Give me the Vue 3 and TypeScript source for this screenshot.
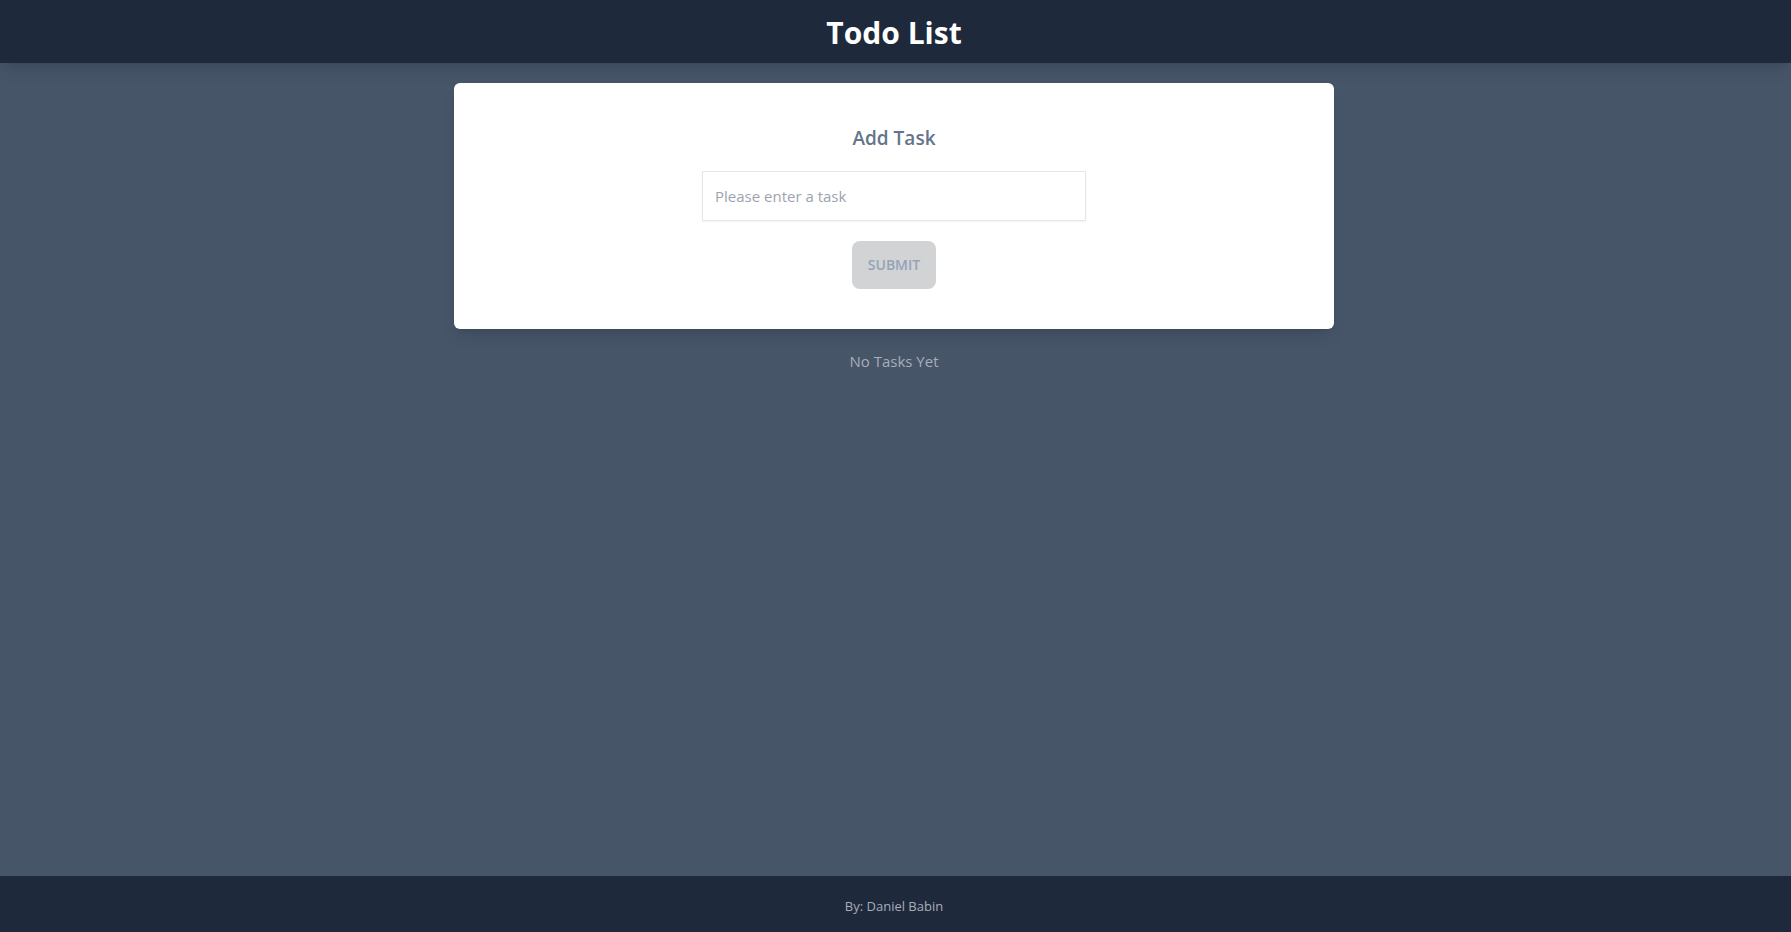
<script setup lang="ts">
import { computed, ref } from 'vue'

const draft = ref('')
const tasks = ref<string[]>([])
const empty = computed(() => draft.value.trim() === '')

function addTask(): void {
  if (empty.value) return
  tasks.value.push(draft.value.trim())
  draft.value = ''
}
</script>

<template>
  <div class="page">
    <header class="header">
      <h1>Todo List</h1>
    </header>
    <main class="main">
      <form class="card" @submit.prevent="addTask">
        <label class="label" for="task">Add Task</label>
        <input id="task" v-model="draft" class="field" type="text" placeholder="Please enter a task" />
        <button class="submit" type="submit" :disabled="empty">SUBMIT</button>
      </form>
      <p v-if="tasks.length === 0" class="note">No Tasks Yet</p>
      <ul v-else class="tasks">
        <li v-for="(task, i) in tasks" :key="i">{{ task }}</li>
      </ul>
    </main>
    <footer class="footer">
      <p>By: Daniel Babin</p>
    </footer>
  </div>
</template>

<style>
body {
  margin: 0;
  background: #475569;
}
</style>

<style scoped>
.page {
  display: flex;
  flex-direction: column;
  box-sizing: border-box;
  min-height: 100vh;
  padding-right: 3px;
  background: #475569;
  color: #a7adb9;
  font-family: "Segoe UI", "Open Sans", "Noto Sans", sans-serif;
  font-size: 15px;
  line-height: 24px;
}
.page *,
.page *::before {
  box-sizing: border-box;
}
h1,
p {
  margin: 0;
}
.header {
  margin-right: -3px;
  padding: 13px 3px 10px 0;
  background: #1e293b;
  box-shadow: 0 10px 15px -3px rgba(0, 0, 0, 0.1), 0 4px 6px -4px rgba(0, 0, 0, 0.1);
  color: #fff;
  text-align: center;
}
.header h1 {
  font-size: 30px;
  font-weight: 700;
  line-height: 40px;
}
.main {
  display: flex;
  flex: 1;
  flex-direction: column;
  align-items: center;
  gap: 20px;
  padding: 20px 16px;
}
.card {
  display: flex;
  flex-direction: column;
  align-items: center;
  width: 100%;
  max-width: 880px;
  padding: 40px;
  border-radius: 6px;
  background: #fff;
  box-shadow: 0 10px 15px -3px rgba(0, 0, 0, 0.1), 0 4px 6px -4px rgba(0, 0, 0, 0.1);
}
.label {
  margin-bottom: 18px;
  color: #64748b;
  font-size: 19px;
  font-weight: 600;
  line-height: 30px;
}
.field {
  width: 100%;
  max-width: 384px;
  height: 50px;
  margin-bottom: 20px;
  padding: 12px;
  border: 1px solid #e5e7eb;
  border-radius: 0;
  background: #fff;
  box-shadow: 0 1px 2px rgba(0, 0, 0, 0.05);
  color: #475569;
  font: inherit;
}
.field::placeholder {
  color: #9ca3af;
  opacity: 1;
}
.submit {
  height: 48px;
  min-width: 84px;
  padding: 0 15px;
  border: 0;
  border-radius: 8px;
  background: #d1d3d4;
  color: #1e293b;
  font: inherit;
  font-size: 14px;
  font-weight: 600;
}
.submit:disabled {
  color: #94a3b8;
}
.tasks {
  margin: 0;
  padding: 0;
  list-style: none;
}
.footer {
  margin-right: -3px;
  padding: 20px 3px 16px 0;
  background: #1e293b;
  font-size: 13px;
  line-height: 20px;
  text-align: center;
}
</style>
